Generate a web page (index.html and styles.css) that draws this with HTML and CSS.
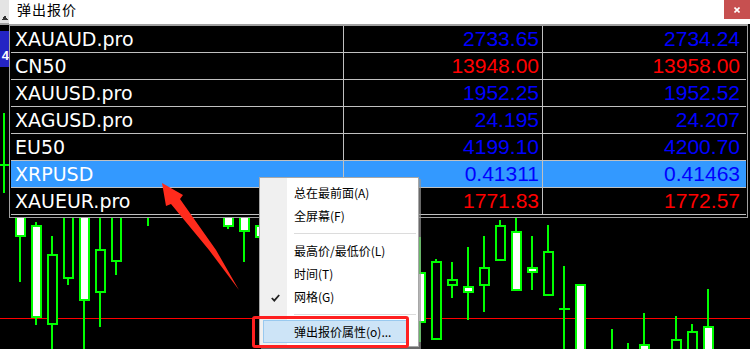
FILE: index.html
```html
<!DOCTYPE html>
<html lang="zh-CN">
<head>
<meta charset="utf-8">
<title>弹出报价</title>
<link rel="stylesheet" href="styles.css">
</head>
<body>
<div class="screen">
  <svg class="chart" width="750" height="349" viewBox="0 0 750 349">
    <rect x="0" y="0" width="9" height="23" fill="#e4e4e4"/>
    <path d="M2 20 L8 20 L5 15 Z" fill="#333"/>
    <rect x="0" y="23" width="9" height="2" fill="#a0a0a0"/>
    <rect x="0" y="31" width="9" height="36" fill="#2424c4"/>
    <text x="9" y="60" text-anchor="end" class="tag">4</text>
    <rect x="0" y="318" width="750" height="1" fill="#ff0000"/>
    <g class="wicks">
      <line x1="4" y1="113" x2="4" y2="193"/>
      <line x1="0" y1="165" x2="9" y2="165"/>
      <line x1="20" y1="230" x2="20" y2="282"/>
      <line x1="36" y1="222" x2="36" y2="325"/>
      <line x1="52" y1="236" x2="52" y2="349"/>
      <line x1="68" y1="260" x2="68" y2="285"/>
      <line x1="84" y1="290" x2="84" y2="349"/>
      <line x1="100" y1="200" x2="100" y2="327"/>
      <line x1="116" y1="250" x2="116" y2="275"/>
      <line x1="148" y1="200" x2="148" y2="226"/>
      <line x1="228" y1="200" x2="228" y2="229"/>
      <line x1="244" y1="200" x2="244" y2="262"/>
      <line x1="260" y1="220" x2="260" y2="240"/>
      <line x1="420" y1="237" x2="420" y2="342"/>
      <line x1="436" y1="259" x2="436" y2="300"/>
      <line x1="452" y1="262" x2="452" y2="298"/>
      <line x1="468" y1="247" x2="468" y2="320"/>
      <line x1="484" y1="236" x2="484" y2="312"/>
      <line x1="500" y1="220" x2="500" y2="240"/>
      <line x1="516" y1="218" x2="516" y2="250"/>
      <line x1="532" y1="236" x2="532" y2="290"/>
      <line x1="548" y1="225" x2="548" y2="260"/>
      <line x1="564" y1="266" x2="564" y2="349"/>
      <line x1="559" y1="309" x2="570" y2="309"/>
      <line x1="612" y1="329" x2="612" y2="349"/>
      <line x1="628" y1="343" x2="628" y2="349"/>
      <line x1="644" y1="313" x2="644" y2="349"/>
      <line x1="676" y1="316" x2="676" y2="349"/>
      <line x1="692" y1="324" x2="692" y2="349"/>
      <line x1="708" y1="289" x2="708" y2="349"/>
    </g>
    <g class="bodies">
      <rect class="up" x="16" y="201" width="9" height="35"/>
      <rect class="up" x="32" y="226" width="9" height="91"/>
      <rect class="dn" x="48" y="255" width="9" height="69"/>
      <rect class="dn" x="64" y="201" width="9" height="77"/>
      <rect class="up" x="80" y="201" width="9" height="99"/>
      <rect class="dn" x="96" y="250" width="9" height="42"/>
      <rect class="dn" x="112" y="201" width="9" height="60"/>
      <rect class="up" x="224" y="201" width="9" height="25"/>
      <rect class="up" x="240" y="201" width="9" height="30"/>
      <rect class="up" x="256" y="226" width="9" height="11"/>
      <rect class="up" x="416" y="273" width="9" height="49"/>
      <rect class="dn" x="432" y="262" width="9" height="77"/>
      <rect class="dn" x="448" y="280" width="9" height="5"/>
      <rect class="up" x="464" y="287" width="9" height="5"/>
      <rect class="dn" x="480" y="268" width="9" height="17"/>
      <rect class="dn" x="496" y="226" width="9" height="34"/>
      <rect class="up" x="512" y="232" width="9" height="58"/>
      <rect class="up" x="528" y="268" width="9" height="4"/>
      <rect class="dn" x="544" y="252" width="9" height="43"/>
      <rect class="up" x="576" y="285" width="9" height="80"/>
      <rect class="up" x="640" y="345" width="9" height="20"/>
      <rect class="dn" x="672" y="340" width="9" height="20"/>
      <rect class="dn" x="688" y="332" width="9" height="30"/>
      <rect class="up" x="704" y="327" width="9" height="40"/>
    </g>
  </svg>

  <div class="quote-window">
    <div class="titlebar">
      <span class="title">弹出报价</span>
      <span class="close">
        <svg width="6" height="6" viewBox="0 0 6 6"><path d="M0.5 0.5 L5.5 5.5 M5.5 0.5 L0.5 5.5" stroke="#fff" stroke-width="1.6"/></svg>
      </span>
    </div>
    <div class="frame">
      <div class="row"><span class="sym">XAUAUD.pro</span><span class="num bid blue">2733.65</span><span class="num ask blue">2734.24</span></div>
      <div class="row"><span class="sym">CN50</span><span class="num bid red">13948.00</span><span class="num ask red">13958.00</span></div>
      <div class="row"><span class="sym">XAUUSD.pro</span><span class="num bid blue">1952.25</span><span class="num ask blue">1952.52</span></div>
      <div class="row"><span class="sym">XAGUSD.pro</span><span class="num bid blue">24.195</span><span class="num ask blue">24.207</span></div>
      <div class="row"><span class="sym">EU50</span><span class="num bid blue">4199.10</span><span class="num ask blue">4200.70</span></div>
      <div class="row selected"><span class="sym">XRPUSD</span><span class="num bid blue">0.41311</span><span class="num ask blue">0.41463</span></div>
      <div class="row"><span class="sym">XAUEUR.pro</span><span class="num bid red">1771.83</span><span class="num ask red">1772.57</span></div>
    </div>
  </div>

  <div class="menu">
    <div class="item"><span class="gut"></span><span>总在最前面(A)</span></div>
    <div class="item"><span class="gut"></span><span>全屏幕(F)</span></div>
    <div class="sep"></div>
    <div class="item"><span class="gut"></span><span>最高价/最低价(L)</span></div>
    <div class="item"><span class="gut"></span><span>时间(T)</span></div>
    <div class="item"><span class="gut"><svg width="9" height="8" viewBox="0 0 9 8"><path d="M0.8 4 L3.3 6.6 L8.2 1" fill="none" stroke="#222" stroke-width="1.8"/></svg></span><span>网格(G)</span></div>
    <div class="sep"></div>
    <div class="item hot"><span class="gut"></span><span>弹出报价属性(o)...</span></div>
  </div>

  <div class="callout"></div>

  <svg class="arrow" width="750" height="349" viewBox="0 0 750 349">
    <polygon points="162,183 183,195 180,199 216,250 239,290 209,250 171,204 166,206" fill="#ff2b1c"/>
  </svg>
</div>
</body>
</html>
```

FILE: styles.css
```css
* { box-sizing: border-box; }
html, body { margin: 0; padding: 0; }
body { width: 750px; height: 349px; overflow: hidden; background: #000; }

.screen { position: relative; width: 750px; height: 349px; overflow: hidden; background: #000; }

.chart { position: absolute; left: 0; top: 0; display: block; shape-rendering: crispEdges; }
.chart .tag { font-family: "Liberation Sans", sans-serif; font-size: 13px; font-weight: bold; fill: #fff; }
.wicks line { stroke: #00ff00; stroke-width: 2; }
.bodies rect { stroke: #00ff00; stroke-width: 2; }
.bodies .up { fill: #fff; }
.bodies .dn { fill: #000; }

.quote-window { position: absolute; left: 9px; top: 0; width: 741px; }
.titlebar { height: 24px; background: #fff; display: flex; justify-content: space-between; align-items: flex-start; }
.title { margin-left: 8px; padding-top: 1px; font-family: "Noto Sans CJK SC", sans-serif; font-size: 14px; line-height: 16px; color: #000; letter-spacing: 1px; }
.close { width: 26px; height: 19px; background: #c75050; display: flex; align-items: center; justify-content: center; }
.close svg { display: block; }

.frame { width: 739px; background: #000; border: 1px solid #a0a0a0; border-top-width: 2px; padding: 0 1px 2px 1px; }
.row { display: grid; grid-template-columns: 332px 199px 204px; height: 27px; border-bottom: 1px solid #c0c0c0; }
.row.selected { background: #3399ff; }
.sym { padding-left: 4px; font-family: "DejaVu Sans", sans-serif; font-size: 19px; line-height: 26px; color: #fff; white-space: nowrap; }
.num { border-left: 1px solid #c0c0c0; text-align: right; font-family: "Liberation Sans", sans-serif; font-size: 21px; line-height: 26px; white-space: nowrap; }
.num.bid { padding-right: 3px; }
.num.ask { padding-right: 6px; }
.blue { color: #0000ff; }
.red { color: #ff0000; }

.menu { position: absolute; left: 259px; top: 177px; width: 160px; background: linear-gradient(to right, #f0f0f0 0, #f0f0f0 27px, #fff 27px); border: 1px solid #a7a7a7; padding: 3px 2px 3px 3px; box-shadow: 2px 2px 0 rgba(150, 150, 150, 0.7); font-family: "Noto Sans CJK SC", sans-serif; font-size: 12px; color: #000; }
.item { height: 23px; display: flex; align-items: center; white-space: nowrap; }
.gut { width: 31px; flex: none; display: flex; align-items: center; padding-left: 8px; padding-top: 3px; }
.gut svg { display: block; }
.sep { height: 1px; margin: 6px 0 5px 31px; background: #dcdcdc; }
.item.hot { margin-right: 8px; background: #cde4f7; box-shadow: inset 0 0 0 1px #99c9ef; }

.callout { position: absolute; left: 252px; top: 316px; width: 157px; height: 32px; border: 3px solid #ff2020; border-radius: 3px; }

.arrow { position: absolute; left: 0; top: 0; pointer-events: none; }
```
